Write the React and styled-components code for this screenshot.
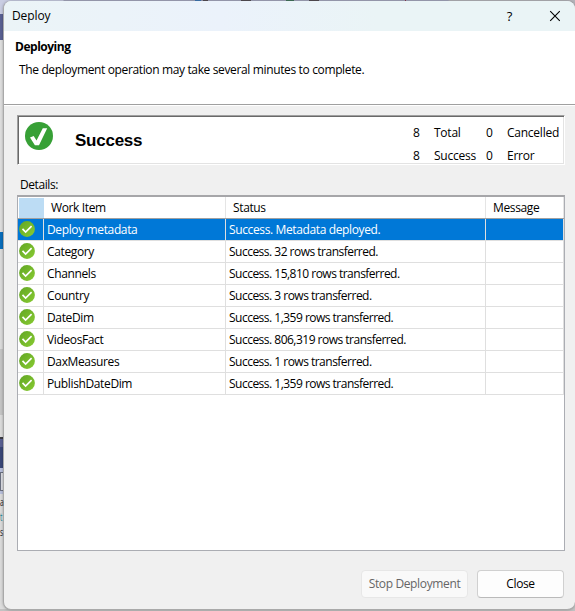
import React from "react";
import styled, { createGlobalStyle, css } from "styled-components";

const GlobalStyle = createGlobalStyle`
  * { box-sizing: border-box; }
  body { margin: 0; background: #dcdcdc; overflow: hidden; }
  button { font: inherit; letter-spacing: inherit; padding: 0; }
`;

const Desktop = styled.div`
  display: grid;
  grid-template: 611px / 575px;
  overflow: hidden;
  color: #000;
  font: 12px/16px "Open Sans", "Noto Sans", sans-serif;
  letter-spacing: -0.36px;
`;

const Backdrop = styled.div`
  grid-area: 1 / 1;
  display: flex;
  flex-direction: column;
  background:
    linear-gradient(
      90deg,
      #c9cde2 0 63px, #a5a7be 64px 195px, #3f78b4 195px 201px, #9a9cb4 201px 203px,
      #554f55 203px 208px, #a5a7be 208px 241px, #554f55 241px 251px, #a5a7be 251px 286px,
      #44755c 286px 294px, #a5a7be 294px 309px, #554f55 309px 319px, #a5a7be 319px 405px,
      #8c3c50 405px 406px, #a5a7be 406px 448px, #b4b4ba 449px
    ) 0 0 / 100% 14px no-repeat,
    #c2c2c2;
`;

const Band = styled.div`
  flex: none;
  height: ${(p) => p.$h}px;
  background: ${(p) => p.$color};
  border: 0 solid #6b7080;
  ${(p) => p.$outlined && css`border-width: 1px 0 1px 1px;`}
`;

const EdgeText = styled.div`
  flex: none;
  width: 12px;
  height: 115px;
  background: #dcdcdc;
  font: 11px/15px "Open Sans", sans-serif;
  letter-spacing: 0;
`;

const EdgeLine = styled.div`
  color: ${(p) => p.$color};
  transform: scaleX(0.6);
  transform-origin: left;
`;

const Dialog = styled.section`
  grid-area: 1 / 1;
  display: flex;
  flex-direction: column;
  margin: 1px 0 1px 3px;
  border: solid #a9a9a9;
  border-width: 0 0 1px 1px;
  border-radius: 8px;
  overflow: hidden;
  background: #f0f0f0;
  box-shadow: 0 0 3px rgba(0, 0, 0, 0.3);
`;

const TitleBar = styled.header`
  display: flex;
  align-items: center;
  height: 30px;
  padding: 0 14px 0 8px;
  background: linear-gradient(90deg, #ebf4f7, #ebf2fb 38%, #eaf4f6 65%);
`;

const Title = styled.span`
  flex: 1;
  letter-spacing: -0.1px;
`;

const HelpMark = styled.span`
  margin-right: 37px;
  font-size: 13px;
  font-weight: 500;
`;

const Intro = styled.div`
  height: 74px;
  padding: 8px 12px 0 11px;
  background: #fff;
  border-bottom: 1px solid #a0a0a0;
`;

const Heading = styled.h1`
  margin: 0;
  font: bold 12px/16px "Open Sans", sans-serif;
  letter-spacing: -0.48px;
`;

const Description = styled.p`
  margin: 7px 0 0 4px;
`;

const Body = styled.main`
  flex: 1;
  display: flex;
  flex-direction: column;
  padding: 9px 10px 11px 13px;
  border-top: 1px solid #fff;
`;

const Summary = styled.div`
  display: flex;
  height: 50px;
  border: 1px solid;
  border-color: #a0a0a0 #fff #fff #a0a0a0;
  background: #fff;
  box-shadow: inset 1px 1px #696969, inset -1px -1px #e3e3e3;
`;

const SuccessMark = styled.svg`
  width: 28px;
  height: 28px;
  margin: 6px 0 0 7px;
`;

const Result = styled.h2`
  flex: 1;
  margin: 15px 0 0 22px;
  font: bold 17px/20px "Liberation Sans", Arial, sans-serif;
  letter-spacing: -0.25px;
`;

const Counts = styled.dl`
  display: grid;
  grid-template-columns: 21px 52px 21px 57px;
  grid-auto-rows: 23px;
  margin: 5px 0 0;
  line-height: 23px;
`;

const Count = styled.dd`
  margin: 0;
`;

const CountName = styled.dt`
  letter-spacing: -0.24px;
`;

const Details = styled.div`
  margin: 12px 0 2px 3px;
  letter-spacing: -0.42px;
`;

const Table = styled.div`
  height: 356px;
  border: 1px solid #abadb3;
  border-top: 2px solid #a6a6a9;
  background: #fff;
`;

const GridRow = styled.div`
  display: grid;
  grid-template-columns: 26px 182px 260px 1fr;
  height: 22px;
`;

const HeadRow = styled(GridRow)`
  border-bottom: 1px solid #a0a0a0;
`;

const HeadCell = styled.div`
  padding: 3px 0 0 7px;
  border-right: 1px solid #e5e5e5;
  line-height: 16px;
`;

const SelectorCell = styled.div`
  margin: 1px 0 0 1px;
  background: #bcdcf4;
`;

const Cell = styled.div`
  padding: 2px 0 0 3px;
  line-height: 17px;
  letter-spacing: ${(p) => (p.$tight ? "-0.51px" : "-0.37px")};
  border: solid #dfdfdf;
  border-width: 0 1px 1px 0;
  white-space: nowrap;
`;

const ItemRow = styled(GridRow)`
  ${(p) =>
    p.$selected &&
    css`
      background: #0078d7;
      color: #fff;
    `}
`;

const StatusCell = styled(Cell)`
  padding: 2px 0 0 1px;
`;

const StatusIcon = styled.svg`
  display: block;
  width: 16px;
  height: 16px;
`;

const Actions = styled.footer`
  display: flex;
  gap: 9px;
  justify-content: flex-end;
  margin: 19px 1px 0 0;
`;

const Button = styled.button`
  width: ${(p) => p.$w}px;
  height: 28px;
  border: 1px solid #d0d0d0;
  border-bottom-color: #bababa;
  border-radius: 4px;
  background: #fdfdfd;
  color: #000;
  &:disabled {
    border-color: #e7e7e7;
    background: #f9f9f9;
    color: #666;
  }
`;

const items = [
  ["Deploy metadata", "Success. Metadata deployed."],
  ["Category", "Success. 32 rows transferred."],
  ["Channels", "Success. 15,810 rows transferred."],
  ["Country", "Success. 3 rows transferred."],
  ["DateDim", "Success. 1,359 rows transferred."],
  ["VideosFact", "Success. 806,319 rows transferred."],
  ["DaxMeasures", "Success. 1 rows transferred."],
  ["PublishDateDim", "Success. 1,359 rows transferred."],
];

const bands = [
  { h: 14, color: "transparent" },
  { h: 26, color: "#5a6193" },
  { h: 192, color: "#dfdfdf" },
  { h: 17, color: "#0a6fbd" },
  { h: 100, color: "#dcdcdc" },
  { h: 66, color: "#c6c6c6" },
  { h: 22, color: "#dcdcdc" },
  { h: 2, color: "#3c3c44" },
  { h: 8, color: "#5a6193" },
  { h: 21, color: "#3a4778" },
  { h: 4, color: "#b9c0dc" },
  { h: 19, color: "#dcdde2", outlined: true },
  { h: 3, color: "#b9c0dc" },
];

const RowCheck = () => (
  <StatusIcon viewBox="0 0 16 16">
    <defs>
      <linearGradient id="rowCheck" x1="0" y1="0" x2="1" y2="1">
        <stop offset="0" stopColor="#62a624" />
        <stop offset="1" stopColor="#88cb32" />
      </linearGradient>
    </defs>
    <circle cx="8" cy="8" r="7.9" fill="url(#rowCheck)" />
    <path d="M3.5 7.9 6.6 11l6-5.8" fill="none" stroke="#fff" strokeWidth="1.7" />
  </StatusIcon>
);

export default function App() {
  return (
    <Desktop>
      <GlobalStyle />
      <Backdrop>
        {bands.map((b, i) => (
          <Band key={i} $h={b.h} $color={b.color} $outlined={b.outlined} />
        ))}
        <EdgeText>
          <EdgeLine $color="#222">a</EdgeLine>
          <EdgeLine $color="#147c8c">t</EdgeLine>
          <EdgeLine $color="#222">s</EdgeLine>
        </EdgeText>
      </Backdrop>
      <Dialog>
        <TitleBar>
          <Title>Deploy</Title>
          <HelpMark>?</HelpMark>
          <svg width="12" height="12" viewBox="0 0 12 12">
            <path d="M1.2 1.2l9.6 9.6M10.8 1.2L1.2 10.8" stroke="#000" strokeWidth="1.1" />
          </svg>
        </TitleBar>
        <Intro>
          <Heading>Deploying</Heading>
          <Description>The deployment operation may take several minutes to complete.</Description>
        </Intro>
        <Body>
          <Summary>
            <SuccessMark viewBox="0 0 28 28">
              <circle cx="14" cy="14" r="14" fill="#37a036" />
              <path d="M5 15.6 8.7 14l2.8 4.6L17.8 6.3h4.4L14 23.2h-4.1z" fill="#fff" />
            </SuccessMark>
            <Result>Success</Result>
            <Counts>
              <Count>8</Count>
              <CountName>Total</CountName>
              <Count>0</Count>
              <CountName>Cancelled</CountName>
              <Count>8</Count>
              <CountName>Success</CountName>
              <Count>0</Count>
              <CountName>Error</CountName>
            </Counts>
          </Summary>
          <Details>Details:</Details>
          <Table>
            <HeadRow>
              <SelectorCell />
              <HeadCell>Work Item</HeadCell>
              <HeadCell>Status</HeadCell>
              <HeadCell>Message</HeadCell>
            </HeadRow>
            {items.map(([name, status], i) => (
              <ItemRow key={name} $selected={i === 0}>
                <StatusCell>
                  <RowCheck />
                </StatusCell>
                <Cell>{name}</Cell>
                <Cell $tight={i > 0}>{status}</Cell>
                <Cell />
              </ItemRow>
            ))}
          </Table>
          <Actions>
            <Button $w={107} disabled>
              Stop Deployment
            </Button>
            <Button $w={87}>Close</Button>
          </Actions>
        </Body>
      </Dialog>
    </Desktop>
  );
}
